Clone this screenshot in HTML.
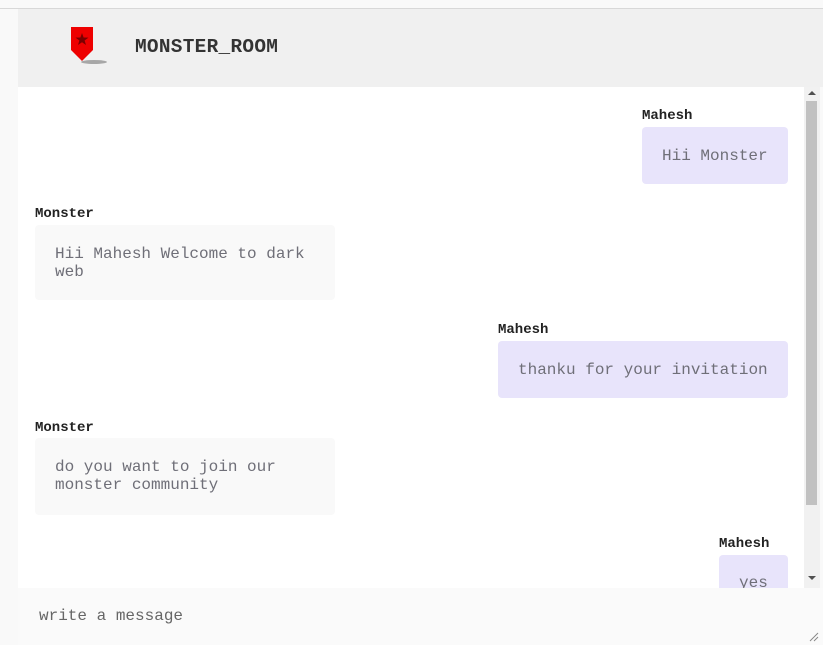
<!DOCTYPE html>
<html><head><style>
*{margin:0;padding:0;box-sizing:border-box}
body{width:823px;height:645px;background:#f9f9f9;font-family:"Liberation Mono",monospace;position:relative;overflow:hidden}
.top{position:absolute;left:0;top:8px;width:823px;height:1px;background:#d8d8d8}
.hdr{position:absolute;left:18px;top:9px;width:805px;height:78px;background:#f0f0f0}
.title{position:absolute;left:135px;top:36px;font-size:19.4px;font-weight:bold;color:#333;letter-spacing:0.3px}
.chat{position:absolute;left:18px;top:87px;width:786px;height:501px;background:#fff;overflow:hidden}
.sb{position:absolute;left:804px;top:87px;width:16px;height:501px;background:#f1f1f1}
.thumb{position:absolute;left:2px;top:14px;width:11px;height:404px;background:#c1c1c1}
.n{position:absolute;font-size:14px;font-weight:bold;color:#222}
.b{position:absolute;font-size:16px;line-height:18px;color:#6f6f78;padding:20px;border-radius:4px}
.m{background:#e8e4fb}
.o{background:#f9f9f9;width:300px}
.inp{position:absolute;left:18px;top:588px;width:805px;height:57px;background:#fafafa}
.ph{position:absolute;left:39px;top:607px;font-size:16px;color:#666}
</style></head><body>
<div class="top"></div>
<div class="hdr"></div>
<svg style="position:absolute;left:68px;top:26px" width="46" height="40">
<ellipse cx="26" cy="36" rx="13" ry="2" fill="#777" opacity="0.6"/>
<path d="M3 1 H25 V24 L14 35 L3 24 Z" fill="#e00"/>
<path d="M14 7 L15.6 11.5 L20.5 11.6 L16.6 14.5 L18 19 L14 16.3 L10 19 L11.4 14.5 L7.5 11.6 L12.4 11.5Z" fill="#7a0000"/>
</svg>
<div class="title">MONSTER_ROOM</div>
<div class="chat">
<div class="n" style="left:624px;top:21px">Mahesh</div>
<div class="b m" style="left:624px;top:40px;width:146px;height:57px">Hii Monster</div>
<div class="n" style="left:17px;top:119px">Monster</div>
<div class="b o" style="left:17px;top:138px;height:75px">Hii Mahesh Welcome to dark web</div>
<div class="n" style="left:480px;top:235px">Mahesh</div>
<div class="b m" style="left:480px;top:254px;width:290px;height:57px;white-space:nowrap">thanku for your invitation</div>
<div class="n" style="left:17px;top:333px">Monster</div>
<div class="b o" style="left:17px;top:351px;height:77px">do you want to join our monster community</div>
<div class="n" style="left:701px;top:449px">Mahesh</div>
<div class="b m" style="left:701px;top:468px;width:69px;height:57px;padding:19px 20px">yes</div>
</div>
<div class="sb"><div class="thumb"></div>
<div style="position:absolute;left:4px;top:4px;border:4px solid transparent;border-bottom:4px solid #505050;border-top:0"></div>
<div style="position:absolute;left:4px;top:489px;border:4px solid transparent;border-top:4px solid #505050;border-bottom:0"></div>
</div>
<div class="inp"></div>
<div class="ph">write a message</div>
<svg style="position:absolute;left:809px;top:632px" width="10" height="10"><path d="M9 1 L1 9 M9 5 L5 9" stroke="#888" stroke-width="1"/></svg>
</body></html>
